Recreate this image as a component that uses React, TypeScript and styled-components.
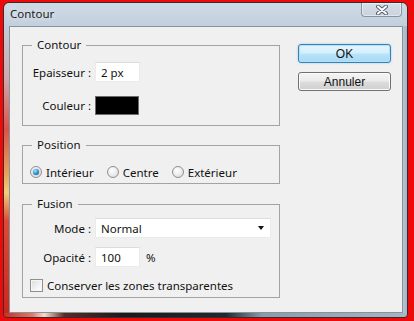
import React from 'react'
import styled, { createGlobalStyle } from 'styled-components'

const GlobalStyle = createGlobalStyle`
  html, body {
    margin: 0;
    padding: 0;
  }
  body {
    background: #ec0a0a;
    font-family: 'Noto Sans', 'Liberation Sans', sans-serif;
    font-size: 11.5px;
    color: #111;
  }
`

const Screen = styled.div`
  width: 414px;
  height: 321px;
  box-sizing: border-box;
  padding: 2px 6px 3px 3px;
  background: #ec0a0a;
  overflow: hidden;
`

const Window = styled.div`
  height: 100%;
  box-sizing: border-box;
  display: grid;
  grid-template-columns: 5px 1fr 4px;
  grid-template-rows: 23px 1fr 4px;
  border: 1px solid #3b2a2a;
  border-radius: 6px 6px 4px 4px;
  overflow: hidden;
`

const TitleBar = styled.div`
  grid-column: 1 / 4;
  display: flex;
  align-items: flex-start;
  padding: 0 5px 0 6px;
  background: linear-gradient(180deg, #cfdae5 0%, #c2cfdc 100%);
`

const Title = styled.span`
  margin-top: 3px;
  font-size: 11.5px;
  color: #1b1b1b;
  text-shadow: 0 0 6px rgba(255, 255, 255, 0.9);
`

const CloseButton = styled.div`
  margin-left: auto;
  width: 41px;
  height: 14px;
  box-sizing: border-box;
  display: flex;
  align-items: center;
  justify-content: center;
  border: 1px solid #8595a6;
  border-top: none;
  border-radius: 0 0 4px 4px;
  background: linear-gradient(180deg, #d6dee7 0%, #c9d3de 100%);
  box-shadow: inset 0 0 0 1px rgba(255, 255, 255, 0.45);
`

const LeftFrame = styled.div`
  background: linear-gradient(
    180deg,
    #c4cdd6 0%,
    #cfa9ad 18%,
    #d9534a 36%,
    #e7a55c 52%,
    #f0d07a 58%,
    #dc4a35 68%,
    #c9281e 100%
  );
`

const RightFrame = styled.div`
  background: linear-gradient(90deg, #b8c6d3 0%, #a4b3c2 100%);
`

const BottomFrame = styled.div`
  grid-column: 1 / 4;
  background: linear-gradient(
    90deg,
    #c93022 0%,
    #e0786a 7%,
    #f4ddd0 10%,
    #5a2a24 15%,
    #1c1a1a 30%,
    #222830 55%,
    #8a9bab 64%,
    #a7b6c5 100%
  );
`

const Client = styled.div`
  background: #f0f0f0;
  border: 1px solid #86929e;
  display: grid;
  grid-template-columns: 258px 93px;
  column-gap: 18px;
  align-content: start;
  padding: 10px 0 0 12px;
`

const Groups = styled.div`
  display: flex;
  flex-direction: column;
  gap: 11px;
`

const Group = styled.fieldset<{ $pad: string }>`
  margin: 0;
  padding: ${p => p.$pad};
  min-width: 0;
  border: 1px solid #a3a3a3;
  border-radius: 0;
  display: flex;
  flex-direction: column;
`

const Legend = styled.legend`
  margin-left: 9px;
  padding: 0 5px;
  line-height: 16px;
  font-size: 11.5px;
  color: #111;
`

const FieldRow = styled.div<{ $gap?: number }>`
  display: grid;
  grid-template-columns: 68px auto;
  column-gap: 4px;
  align-items: center;
  justify-items: start;
  margin-top: ${p => p.$gap ?? 0}px;
`

const Label = styled.span`
  justify-self: end;
  white-space: nowrap;
`

const TextBox = styled.div<{ $w: number }>`
  width: ${p => p.$w}px;
  height: 20px;
  box-sizing: border-box;
  display: flex;
  align-items: center;
  padding-left: 5px;
  background: #fff;
  border: 1px solid #ebebeb;
  border-top-color: #dcdcdc;
`

const Unit = styled.span`
  margin-left: 6px;
`

const Swatch = styled.div`
  width: 44px;
  height: 19px;
  box-sizing: border-box;
  background: #000;
  border: 1px solid #6c6c6c;
`

const SelectBox = styled(TextBox)`
  justify-content: space-between;
  padding-right: 6px;
`

const Arrow = styled.span`
  width: 0;
  height: 0;
  border-left: 3.5px solid transparent;
  border-right: 3.5px solid transparent;
  border-top: 4px solid #111;
`

const Radios = styled.div`
  display: flex;
  align-items: center;
  gap: 13px;
  padding-left: 7px;
  height: 16px;
`

const Option = styled.label`
  display: inline-flex;
  align-items: center;
  gap: 4px;
  white-space: nowrap;
`

const RadioDot = styled.span<{ $on?: boolean }>`
  width: 12px;
  height: 12px;
  box-sizing: border-box;
  border-radius: 50%;
  border: 1px solid #8e8f8f;
  background: radial-gradient(circle at 40% 35%, #ffffff 0%, #e4e4e4 70%, #d0d0d0 100%);
  display: flex;
  align-items: center;
  justify-content: center;

  &::after {
    content: '';
    display: ${p => (p.$on ? 'block' : 'none')};
    width: 6px;
    height: 6px;
    border-radius: 50%;
    background: radial-gradient(circle at 35% 30%, #9fe2ff 0%, #2a8fd0 55%, #124c80 100%);
    box-shadow: 0 0 1px #0d3a64;
  }
`

const CheckRow = styled.label`
  display: flex;
  align-items: center;
  gap: 4px;
  height: 16px;
  padding-left: 7px;
  margin-top: 10px;
  white-space: nowrap;
`

const CheckBox = styled.span`
  width: 13px;
  height: 13px;
  box-sizing: border-box;
  border: 1px solid #8e8f8f;
  background: linear-gradient(135deg, #dcdcdc 0%, #f3f3f3 60%, #ffffff 100%);
  box-shadow: inset 0 0 0 1px #f6f6f6;
`

const Buttons = styled.div`
  display: flex;
  flex-direction: column;
  gap: 9px;
  margin-top: 7px;
`

const Button = styled.button<{ $default?: boolean }>`
  width: 93px;
  height: 19px;
  padding: 0;
  box-sizing: border-box;
  font-family: 'Liberation Sans', Arial, sans-serif;
  font-size: 12px;
  color: #111;
  border-radius: 3px;
  border: 1px solid ${p => (p.$default ? '#3c7fb1' : '#707070')};
  background: ${p =>
    p.$default
      ? 'linear-gradient(180deg, #e5f5fd 0%, #d5effc 48%, #b9e3f9 52%, #a6d9f6 100%)'
      : 'linear-gradient(180deg, #f4f4f4 0%, #ebebeb 48%, #dddddd 52%, #cfcfcf 100%)'};
  box-shadow: ${p =>
    p.$default
      ? 'inset 0 0 0 1px #aee3fa, 0 0 2px rgba(60, 170, 230, 0.6)'
      : 'inset 0 0 0 1px #fbfbfb'};
`

const OpacityBox = styled.div`
  display: flex;
  align-items: center;
`

const CloseGlyph = () => (
  <svg width="12" height="10" viewBox="0 0 12 10">
    <path d="M2 1.5 L10 8.5 M10 1.5 L2 8.5" stroke="#56606c" strokeWidth="4" strokeLinecap="round" />
    <path d="M2 1.5 L10 8.5 M10 1.5 L2 8.5" stroke="#ffffff" strokeWidth="2" strokeLinecap="round" />
  </svg>
)

const App = () => {
  return (
    <Screen>
      <GlobalStyle />
      <Window>
        <TitleBar>
          <Title>Contour</Title>
          <CloseButton>
            <CloseGlyph />
          </CloseButton>
        </TitleBar>
        <LeftFrame />
        <Client>
          <Groups>
            <Group $pad="9px 0 10px 0">
              <Legend>Contour</Legend>
              <FieldRow>
                <Label>Epaisseur :</Label>
                <TextBox $w={45}>2 px</TextBox>
              </FieldRow>
              <FieldRow $gap={14}>
                <Label>Couleur :</Label>
                <Swatch />
              </FieldRow>
            </Group>

            <Group $pad="11px 0 3px 0">
              <Legend>Position</Legend>
              <Radios>
                <Option>
                  <RadioDot $on />
                  Intérieur
                </Option>
                <Option>
                  <RadioDot />
                  Centre
                </Option>
                <Option>
                  <RadioDot />
                  Extérieur
                </Option>
              </Radios>
            </Group>

            <Group $pad="6px 0 4px 0" style={{ marginTop: 1 }}>
              <Legend>Fusion</Legend>
              <FieldRow>
                <Label>Mode :</Label>
                <SelectBox $w={176}>
                  Normal
                  <Arrow />
                </SelectBox>
              </FieldRow>
              <FieldRow $gap={9}>
                <Label>Opacité :</Label>
                <OpacityBox>
                  <TextBox $w={45}>100</TextBox>
                  <Unit>%</Unit>
                </OpacityBox>
              </FieldRow>
              <CheckRow>
                <CheckBox />
                Conserver les zones transparentes
              </CheckRow>
            </Group>
          </Groups>

          <Buttons>
            <Button $default>OK</Button>
            <Button>Annuler</Button>
          </Buttons>
        </Client>
        <RightFrame />
        <BottomFrame />
      </Window>
    </Screen>
  )
}

export default App
